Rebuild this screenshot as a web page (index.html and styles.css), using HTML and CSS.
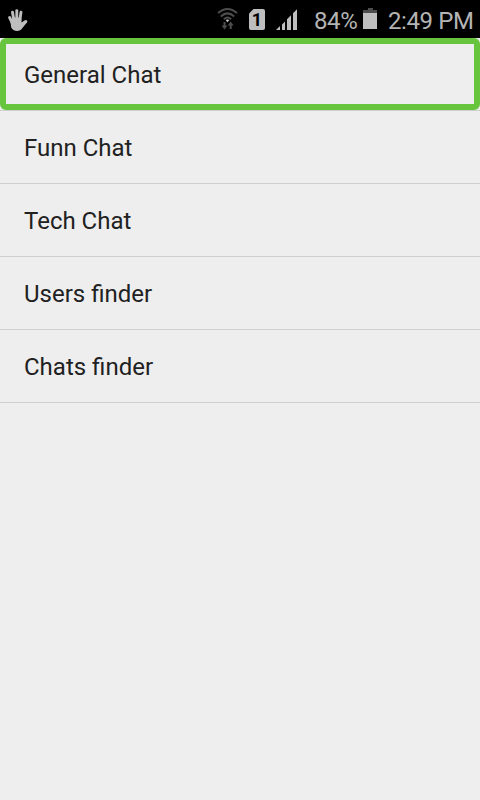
FILE: index.html
```
<!doctype html>
<html lang="en">
<head>

<meta charset="utf-8">
<meta name="viewport" content="width=device-width, initial-scale=1">

<title>Chats</title>

<link rel="stylesheet" href="styles.css">

</head>
<body>

<header class="status-bar">
	<svg class="icon icon--hand" width="22" height="24" viewBox="0 0 22 24">
		<g fill="none" stroke="#bebebe" stroke-linecap="round" stroke-width="2.9">
			<path d="M2.6 9.5L5.3 15"/>
			<path d="M5.5 4.2L7 13"/>
			<path d="M9.8 2.6V13"/>
			<path d="M14 4.2L12.5 14"/>
			<path d="M18.9 13.5L14.5 17.5"/>
		</g>
		<path fill="#bebebe" d="M3.3 12L6 9.5L14.3 9.5L14.6 14.6L18 12.3L19.9 14.5L15.6 19.8Q13.6 23 9.9 23Q6 23 4.2 19.6Z"/>
	</svg>

	<div class="status-icons">
		<svg class="icon icon--wifi" width="22" height="24" viewBox="0 0 22 24">
			<g fill="none" stroke="#4d4d4d" stroke-width="2">
				<path d="M1 6.1Q10.5 -2.1 20 6.1"/>
				<path d="M3.8 9.4Q10.5 3.4 17.2 9.4"/>
				<path d="M6.9 12.3Q10.5 8.8 14.1 12.3"/>
				<path d="M7.5 15V20M13.7 22V16"/>
			</g>
			<path fill="#4d4d4d" d="M4.6 18.6H10.4L7.5 22.6ZM10.8 18.4H16.6L13.7 14.4Z"/>
			<path fill="#d0d0d0" d="M8.7 13.1Q10.5 11.8 12.3 13.1L10.5 15.2Z"/>
		</svg>

		<div class="sim">
			<svg width="16" height="21" viewBox="0 0 16 21">
				<path fill="#bebebe" d="M4.5 0H14Q16 0 16 2V19Q16 21 14 21H2Q0 21 0 19V4.5Z"/>
			</svg>
			<span class="sim__number">1</span>
		</div>

		<svg class="icon icon--signal" width="21" height="22" viewBox="0 0 21 22">
			<path fill="#bebebe" d="M0 21L4 17V21ZM6 15.5L9 12.5V21H6ZM11 10.3L15 6.3V21H11ZM17 4.2L21 0.2V21H17Z"/>
		</svg>
	</div>

	<span class="battery-level">84%</span>

	<svg class="icon icon--battery" width="14" height="21" viewBox="0 0 14 21">
		<path fill="#4d4d4d" d="M5 0H10V2H14V5H0V2H5Z"/>
		<path fill="#bebebe" d="M0 5H14V21H0Z"/>
	</svg>

	<span class="clock">2:49 PM</span>
</header>

<ul class="menu">
	<li class="menu__item --selected">General Chat</li>
	<li class="menu__item">Funn Chat</li>
	<li class="menu__item">Tech Chat</li>
	<li class="menu__item">Users finder</li>
	<li class="menu__item">Chats finder</li>
</ul>

</body>
</html>
```
FILE: styles.css
```
body {
	margin: 0;
	min-height: 100vh;
	background: #eee;
	font-family: 'Roboto', sans-serif;
	font-size: 24px;
	color: #212121;
}

.status-bar {
	display: flex;
	box-sizing: border-box;
	height: 38px;
	padding: 0 6px 0 7px;
	background: #000;
	color: #b4b4b4;
	line-height: 42px;
	letter-spacing: -0.4px;
	white-space: nowrap;
}

.icon {
	display: block;
	flex: none;
}

.icon--hand {
	margin-top: 8px;
}

.status-icons {
	display: flex;
	margin-left: auto;
}

.icon--wifi {
	margin-top: 7px;
}

.sim {
	display: grid;
	width: 16px;
	height: 21px;
	margin: 9px 0 0 10px;
}

.sim svg,
.sim__number {
	grid-area: 1 / 1;
}

.sim__number {
	color: #000;
	font-size: 18px;
	font-weight: 700;
	line-height: 22px;
	letter-spacing: 0;
	text-align: center;
}

.icon--signal {
	margin: 9px 0 0 11px;
}

.battery-level {
	width: 43px;
	margin-left: 17px;
}

.icon--battery {
	margin: 8px 0 0 6px;
}

.clock {
	width: 86px;
	margin-left: 11px;
}

.menu {
	margin: 0;
	padding: 0;
	list-style: none;
}

.menu__item {
	height: 72px;
	padding: 0 24px;
	border-bottom: 1px solid #cecece;
	line-height: 75px;
}

/* the frame sits inside the row, above the divider */
.--selected {
	position: relative;
}

.--selected::after {
	content: '';
	position: absolute;
	top: 0;
	right: 0;
	bottom: 0;
	left: 0;
	border: 6px solid #66c53c;
	border-radius: 6px;
}
```
